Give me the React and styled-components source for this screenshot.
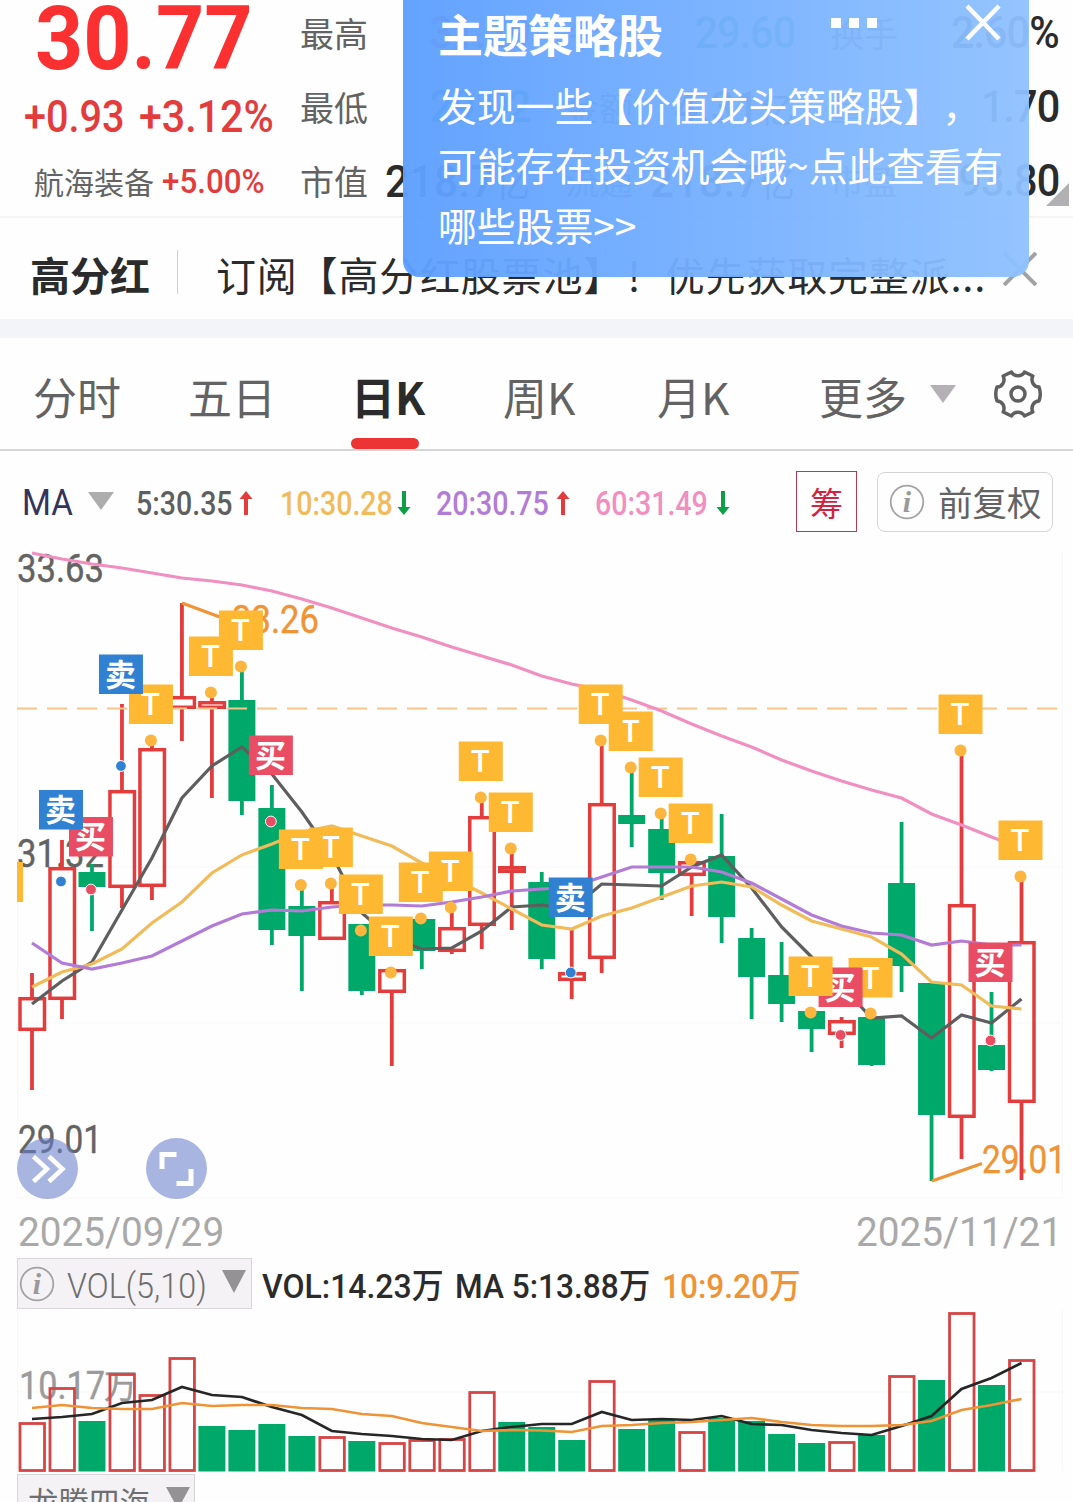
import React from 'react'
import styled, { createGlobalStyle } from 'styled-components'

const Color = {
    Red: '#e33c3c',
    Green: '#00a96a',
    Orange: '#ee9336',
    Tag: '#ffb832',
    Buy: '#e84d64',
    Sell: '#3181d2',
    Ma5: '#5e5e5e',
    Ma10: '#f0bb58',
    Ma20: '#b27cd6',
    Ma60: '#f08fc0',
    Text: '#2b2b2b',
    Gray: '#636363',
}

const CJK = '"Noto Sans CJK SC", "Noto Sans", sans-serif'
const NUM = 'Roboto, "Noto Sans CJK SC", sans-serif'

const GlobalStyle = createGlobalStyle`
  * { box-sizing: border-box; }
  body {
    margin: 0;
    background: #fefefe;
    font-family: ${CJK};
    color: ${Color.Text};
    text-spacing-trim: space-all;
  }
  svg { display: block; }
`

const Page = styled.div`
  position: relative;
  width: 1073px;
  height: 1502px;
  overflow: hidden;
`

// Roboto squeezed horizontally, the quote digits are narrower than the stock face
const NumeralBox = styled.span`
  display: inline-block;
  flex: none;
  width: ${(props) => props.$width}px;
  font-family: ${NUM};
  font-size: ${(props) => props.$size}px;
  font-weight: ${(props) => props.$weight || 400};
  line-height: 1;
  white-space: nowrap;
  color: ${(props) => props.$color || 'inherit'};
`
const NumeralText = styled.span`
  display: inline-block;
  transform-origin: left center;
  transform: scaleX(${(props) => props.$scale});
`

function Numeral({ width, size, weight, color, scale = 0.88, children }) {
    return (
        <NumeralBox $width={width} $size={size} $weight={weight} $color={color}>
            <NumeralText $scale={scale}>{children}</NumeralText>
        </NumeralBox>
    )
}

/* ---------- quote header ---------- */

const Header = styled.div`
  display: grid;
  grid-template-columns: 300px 759px;
  height: 218px;
  border-bottom: 2px solid #f7f2f4;
`
const PriceColumn = styled.div`
  display: flex;
  flex-direction: column;
`
const PriceRow = styled.div`
  display: flex;
  align-items: center;
  height: ${(props) => props.$height}px;
  padding-left: ${(props) => props.$left}px;
`
const SectorName = styled.span`
  width: 128px;
  font-size: 30px;
  line-height: 40px;
  margin-top: -2px;
  color: ${Color.Gray};
`
const QuoteGrid = styled.div`
  display: grid;
  grid-template-columns: 230px 230px 229px;
  grid-template-rows: 74px 74px 74px;
  column-gap: 35px;
  margin-top: -4px;
  height: 220px;
`
const QuoteCell = styled.div`
  display: flex;
  justify-content: space-between;
  align-items: center;
`
const QuoteLabel = styled.span`
  margin-top: -1px;
  font-size: 34px;
  line-height: 40px;
  color: ${Color.Gray};
`
const QuoteValue = styled.span`
  font-family: ${NUM};
  font-size: 44px;
  font-weight: 500;
  line-height: 44px;
  letter-spacing: ${(props) => props.$wide ? 0.5 : -1}px;
  color: ${(props) => props.$color || Color.Text};
  transform: scaleX(${(props) => props.$wide ? 0.96 : 0.94});
  transform-origin: right center;
`
const Unit = styled.span`
  font-family: ${CJK};
  font-size: 36px;
  font-weight: 400;
`
const CornerMark = styled.div`
  position: absolute;
  right: 4px;
  top: 183px;
  border-left: 23px solid transparent;
  border-bottom: 23px solid #b1b1b3;
`

const quotes = [
    ['最高', '31.29', '', Color.Red],
    ['今开', '29.60', '', Color.Green],
    ['换手', '2.60%', ''],
    ['最低', '29.02', '', Color.Green],
    ['金额', '4.31', '亿'],
    ['量比', '1.70', ''],
    ['市值', '218.7', '亿'],
    ['流通', '218.7', '亿'],
    ['市盈', '93.80', ''],
]

function QuoteHeader() {
    return (
        <Header>
            <PriceColumn>
                <PriceRow $height={76} $left={35}>
                    <Numeral width={220} size={89} weight={700} color="#fb3030" scale={0.945}>30.77</Numeral>
                </PriceRow>
                <PriceRow $height={81} $left={24}>
                    <Numeral width={115} size={45} weight={500} color={Color.Red} scale={0.88}>+0.93</Numeral>
                    <Numeral width={140} size={45} weight={500} color={Color.Red} scale={0.915}>+3.12%</Numeral>
                </PriceRow>
                <PriceRow $height={49} $left={34}>
                    <SectorName>航海装备</SectorName>
                    <Numeral width={110} size={33} weight={500} color={Color.Red} scale={0.95}>+5.00%</Numeral>
                </PriceRow>
            </PriceColumn>
            <QuoteGrid>
                {quotes.map(([label, value, unit, color]) => (
                    <QuoteCell key={label}>
                        <QuoteLabel>{label}</QuoteLabel>
                        <QuoteValue $color={color} $wide={Boolean(unit)}>{value}{unit && <Unit>{unit}</Unit>}</QuoteValue>
                    </QuoteCell>
                ))}
            </QuoteGrid>
        </Header>
    )
}

/* ---------- promo line ---------- */

const Promo = styled.div`
  display: flex;
  align-items: center;
  height: 101px;
  padding: 8px 36px 0 30px;
`
const PromoTitle = styled.div`
  width: 147px;
  padding-top: 2px;
  font-size: 40px;
  font-weight: 700;
  line-height: 50px;
`
const PromoRule = styled.div`
  width: 1px;
  height: 44px;
  margin-top: -2px;
  background: #cfcfcf;
`
const PromoText = styled.div`
  flex: 1;
  padding-top: 2px;
  padding-left: 38px;
  font-size: 40px;
  line-height: 50px;
  letter-spacing: 0.8px;
  white-space: nowrap;
`
const PromoClose = styled.svg`
  margin-top: -7px;
`
const Band = styled.div`
  height: 19px;
  background: #f3f4fa;
`

/* ---------- toast ---------- */

const Toast = styled.div`
  position: absolute;
  left: 403px;
  top: 0;
  width: 626px;
  height: 277px;
  padding: 4px 0 0 35px;
  border-radius: 0 0 16px 16px;
  color: #fff;
  background: linear-gradient(90deg, rgba(93, 159, 255, 0.96), rgba(143, 193, 255, 0.95));
`
const ToastHead = styled.div`
  display: flex;
  align-items: flex-start;
  height: 71px;
`
const ToastTitle = styled.div`
  width: 393px;
  font-size: 45px;
  font-weight: 700;
  line-height: 60px;
`
const ToastDots = styled.div`
  display: flex;
  gap: 8px;
  width: 134px;
  padding-top: 14px;
`
const ToastDot = styled.span`
  width: 10px;
  height: 10px;
  background: #fff;
`
const ToastBody = styled.div`
  margin-top: -1px;
  font-size: 38.8px;
  line-height: 60px;
  white-space: pre;
`

function ThemeToast() {
    return (
        <Toast>
            <ToastHead>
                <ToastTitle>主题策略股</ToastTitle>
                <ToastDots><ToastDot /><ToastDot /><ToastDot /></ToastDots>
                <svg width="36" height="38" viewBox="0 0 36 38" stroke="#fff" strokeWidth="4.5">
                    <path d="M2 2L34 35M34 2L2 35" />
                </svg>
            </ToastHead>
            <ToastBody>{'发现一些【价值龙头策略股】，\n可能存在投资机会哦~点此查看有\n哪些股票>>'}</ToastBody>
        </Toast>
    )
}

/* ---------- period tabs ---------- */

const Tabs = styled.div`
  display: grid;
  grid-template-columns: 155px 163px 152px 154px 162px 111px 64px 48px;
  height: 113px;
  padding-left: 33px;
  border-bottom: 2px solid #d6d6d6;
`
const Tab = styled.div`
  position: relative;
  padding-top: 26px;
  font-size: 44px;
  line-height: 64px;
  font-weight: ${(props) => props.$active ? 700 : 400};
  color: ${(props) => props.$active ? Color.Text : Color.Gray};

  &::after {
    content: '';
    display: ${(props) => props.$active ? 'block' : 'none'};
    position: absolute;
    left: 0;
    bottom: 0;
    width: 68px;
    height: 11px;
    border-radius: 6px;
    background: #ec3434;
  }
`
const TabIcon = styled.div`
  padding-top: ${(props) => props.$top}px;
`
const Triangle = styled.div`
  width: 0;
  border: ${(props) => props.$half}px solid transparent;
  border-top: ${(props) => props.$height}px solid ${(props) => props.$color || '#adadad'};
  border-bottom: 0;
`

function Gear() {
    return (
        <svg width="48" height="48" viewBox="-24 -24 48 48" fill="none" stroke="#5f5f5f" strokeWidth="3.5" strokeLinejoin="round">
            <path d="M-6.5 -22C-4 -17 4 -17 6.5 -22L14.8 -18C12.5 -13 15.5 -7 21 -7Q23.500 0 21 7C15.500 7 12.500 13 14.800 18L6.500 22C4 17 -4 17 -6.500 22L-14.800 18C-12.500 13 -15.500 7 -21 7Q-23.500 0 -21 -7C-15.500 -7 -12.500 -13 -14.800 -18Z" />
            <circle r="7" />
        </svg>
    )
}

/* ---------- moving average legend ---------- */

const Legend = styled.div`
  display: grid;
  grid-template-columns: 114px 144px 156px 159px 201px 81px 176px;
  align-items: center;
  height: 101px;
  padding-left: 22px;
`
const LegendItem = styled.div`
  display: flex;
  align-items: center;
  height: 60px;
  padding-top: 3px;
`
const LegendArrow = styled.div`
  margin-top: -5px;
`
const ChipButton = styled.div`
  width: 61px;
  height: 61px;
  border: 1.5px solid #b23a55;
  font-size: 33px;
  line-height: 61px;
  text-align: center;
  color: #cf2440;
`
const AdjustButton = styled.div`
  display: flex;
  align-items: center;
  gap: 13px;
  width: 176px;
  height: 60px;
  padding-left: 11px;
  border: 1.5px solid #d5d5d5;
  border-radius: 8px;
  font-size: 34.5px;
  line-height: 63px;
  white-space: nowrap;
  color: ${Color.Gray};
`

function InfoIcon() {
    return (
        <svg width="36" height="36" viewBox="0 0 36 36">
            <circle cx="18" cy="18" r="16.3" fill="none" stroke="#a3a3a3" strokeWidth="1.8" />
            <text x="18" y="28" textAnchor="middle" fontFamily="Liberation Serif, serif" fontStyle="italic" fontWeight="700" fontSize="30" fill="#999">i</text>
        </svg>
    )
}

function Trend({ up }) {
    return (
        <svg width="14" height="24" viewBox="0 0 14 24" fill={up ? Color.Red : '#0d9f46'}>
            <path d={up ? 'M7 0L13.5 8H9V24H5V8H.5Z' : 'M7 24L13.5 16H9V0H5V16H.5Z'} />
        </svg>
    )
}

const averages = [
    ['5:30.35', 103, Color.Ma5, true],
    ['10:30.28', 117, Color.Ma10, false],
    ['20:30.75', 120, Color.Ma20, true],
    ['60:31.49', 121, Color.Ma60, false],
]

/* ---------- candles ---------- */

const centerX = (i) => 32 + i * 29.985

// [rising, high, body top, body bottom, low]
const candles = [
    [1, 973, 997, 1031, 1090], [1, 840, 867, 1000, 1019], [0, 864, 872, 887, 931], [1, 704, 790, 888, 908],
    [1, 744, 748, 887, 900], [1, 603, 696, 709, 741], [1, 694, 701, 709, 798], [0, 668, 700, 801, 815],
    [0, 785, 808, 930, 945], [0, 887, 906, 936, 991], [1, 885, 901, 940, 940], [0, 924, 924, 991, 995],
    [1, 969, 969, 993, 1066], [0, 919, 919, 951, 969], [1, 909, 927, 952, 954], [1, 798, 816, 926, 949],
    [1, 850, 866, 873, 930], [0, 872, 882, 959, 969], [1, 930, 972, 981, 999], [1, 741, 803, 959, 973],
    [0, 768, 815, 824, 847], [0, 815, 829, 873, 900], [1, 860, 861, 876, 916], [0, 814, 856, 917, 943],
    [0, 928, 938, 977, 1019], [0, 942, 975, 1004, 1022], [0, 1011, 1011, 1029, 1052], [1, 1017, 1020, 1035, 1048],
    [0, 1012, 1017, 1065, 1066], [0, 822, 883, 966, 992], [0, 983, 983, 1115, 1181], [1, 750, 904, 1118, 1159],
    [0, 992, 1045, 1070, 1071], [1, 877, 941, 1103, 1180],
]

const ma5 = [1004, 981, 962, 910, 858, 798, 766, 747, 774, 812, 855, 913, 938, 949, 948, 931, 907, 905, 909, 884, 885, 886, 867, 855, 888, 927, 957, 986, 1018, 1016, 1038, 1015, 1023, 999]
const ma10 = [987, 972, 964, 949, 923, 902, 873, 855, 844, 832, 826, 836, 846, 863, 878, 893, 909, 925, 929, 916, 908, 897, 886, 882, 887, 905, 921, 929, 937, 954, 982, 985, 1006, 1009]
const ma20 = [943, 963, 969, 963, 956, 941, 926, 914, 910, 911, 907, 905, 905, 906, 902, 897, 891, 889, 887, 877, 867, 867, 867, 872, 883, 899, 915, 926, 933, 935, 945, 941, 945, 945]
const ma60 = [553, 559, 564, 568, 573, 578, 581, 585, 591, 599, 608, 618, 628, 637, 647, 656, 665, 676, 684, 690, 700, 711, 724, 736, 747, 760, 771, 781, 790, 798, 814, 825, 837, 848]

// [candle index, kind, tag top, dot y]
const tags = [
    [1, '卖', 790, 881.5], [2, '买', 817, 889.5], [3, '卖', 654.5, 766], [4, 'T', 684.5, 740.5],
    [6, 'T', 636.5, 692.5], [7, 'T', 610.5, 666.5], [8, '买', 735.5, 821.5], [9, 'T', 829.5, 885],
    [10, 'T', 827.5, 883.5], [11, 'T', 874.5, 930.5], [12, 'T', 916.5, 972.5], [13, 'T', 862.5, 918.5],
    [14, 'T', 851.5, 907.5], [15, 'T', 741.5, 797.5], [16, 'T', 792.5, 848.5], [18, '卖', 877.5, 972.5],
    [19, 'T', 684.5, 740.5], [20, 'T', 711.5, 767.5], [21, 'T', 757.5, 813.5], [22, 'T', 803.5, 859.5],
    [26, 'T', 956.5, 1012.5], [27, '买', 967.5, 1035], [28, 'T', 958, 1013.5], [31, 'T', 694.5, 750.5],
    [32, '买', 942.5, 1040.5], [33, 'T', 820.5, 876.5],
]
const tagColor = { T: Color.Tag, 买: Color.Buy, 卖: Color.Sell }

function Line({ values, color, width = 3.2 }) {
    return (
        <polyline
            points={values.map((y, i) => `${centerX(i)},${y}`).join(' ')}
            fill="none"
            stroke={color}
            strokeWidth={width}
        />
    )
}

function Candle({ index, data }) {
    const [rising, high, top, bottom, low] = data
    const x = centerX(index)
    const color = rising ? Color.Red : Color.Green
    return (
        <g stroke={color} fill={rising ? 'none' : color}>
            <path d={`M${x} ${high}V${top + 1}M${x} ${bottom - 1}V${low}`} strokeWidth="3.8" />
            {rising
                ? <rect x={x - 12} y={top + 1.7} width="24.5" height={bottom - top - 3.4} strokeWidth="3.5" />
                : <rect x={x - 13.5} y={top} width="27" height={bottom - top} stroke="none" />}
        </g>
    )
}

function Tag({ data }) {
    const [index, kind, top] = data
    const x = centerX(index) - 1
    const latin = kind === 'T'
    return (
        <g>
            <rect x={x - 22} y={top} width="44" height="39.5" fill={tagColor[kind]} />
            <text
                x={x - 0.5}
                y={top + (latin ? 30.5 : 31)}
                textAnchor="middle"
                fontFamily={latin ? 'Roboto, sans-serif' : CJK}
                fontWeight={latin ? 500 : 700}
                fontSize="31"
                fill="#fff"
            >
                {kind}
            </text>
        </g>
    )
}

const axisText = { fontFamily: NUM, fontSize: 38, lengthAdjust: 'spacingAndGlyphs' }

function CandleChart() {
    return (
        <svg width="1073" height="654" viewBox="0 552 1073 654" overflow="visible">
            <path d="M17.5 552V1198H1062.500V552M17 709H1062M17 867H1062M17 1023H1062" fill="none" stroke="#f8f8f9" />
            <g fill={Color.Gray} stroke={Color.Gray} strokeWidth="0.4">
                <text x="17" y="582" textLength="87" {...axisText}>33.63</text>
                <text x="17" y="867" textLength="87" {...axisText}>31.32</text>
                <text x="18" y="1153" textLength="84" {...axisText}>29.01</text>
            </g>
            <g fill={Color.Orange} stroke={Color.Orange} strokeWidth="0.4">
                <text x="232" y="633" textLength="87" {...axisText}>33.26</text>
                <text x="982" y="1173" textLength="84" {...axisText}>29.01</text>
            </g>
            {candles.map((data, i) => <Candle key={i} index={i} data={data} />)}
            <path d="M17 708.5H1060" stroke="#f6c58c" strokeWidth="1.8" strokeDasharray="20 10" />
            <path d="M182 603L232 621.5M932 1181L982 1163.5" stroke={Color.Orange} strokeWidth="3.2" />
            <Line values={ma5} color={Color.Ma5} />
            <Line values={ma10} color={Color.Ma10} />
            <Line values={ma20} color={Color.Ma20} />
            <Line values={ma60} color={Color.Ma60} />
            {tags.map(([i, kind, , y]) => (
                <circle
                    key={i}
                    cx={centerX(i) - 1}
                    cy={y}
                    r={kind === 'T' ? 6 : 5.4}
                    fill={kind === 'T' ? '#fcb53e' : tagColor[kind]}
                    stroke={kind === 'T' ? 'none' : '#fff'}
                />
            ))}
            <rect x="17" y="862" width="6" height="40" fill={Color.Tag} />
            {tags.slice().reverse().map((data) => <Tag key={data[0]} data={data} />)}
            <g fill="#6a80cb" fillOpacity="0.58">
                <circle cx="47.5" cy="1168.5" r="30.5" />
                <circle cx="176.5" cy="1168.5" r="30.5" />
            </g>
            <g fill="none" stroke="#fff">
                <path d="M33.5 1156.5L47 1169L33.5 1181.5M49 1156.5L62.5 1169L49 1181.5" strokeWidth="4.5" />
                <path d="M162 1169V1154.5H176.5M191 1169V1183.5H176.5" strokeWidth="5" />
            </g>
        </svg>
    )
}

/* ---------- volume ---------- */

const DateRow = styled.div`
  display: flex;
  justify-content: space-between;
  align-items: center;
  height: 52px;
  padding: 1px 11px 0 18px;
`
const VolumeRow = styled.div`
  display: flex;
  align-items: center;
  height: 51px;
  padding-left: 17px;
`
const IndicatorBox = styled.div`
  display: flex;
  align-items: center;
  gap: ${(props) => props.$gap}px;
  width: ${(props) => props.$width}px;
  height: 51px;
  padding-left: ${(props) => props.$left}px;
  border: 1.5px solid #d7d5d7;
  background: #f5f2f5;
  color: #6e6e6e;
`
const BoxLabel = styled.div`
  padding-top: 5px;
`
const BoxArrow = styled.div`
  margin-top: -4px;
`
const VolumeText = styled.div`
  display: flex;
  align-items: center;
  padding-top: 4px;
  padding-left: 10px;
`
const IndicatorName = styled.span`
  width: 124px;
  margin-top: 2px;
  font-size: 30.5px;
  line-height: 50px;
  white-space: nowrap;
`
const BottomRow = styled.div`
  padding-left: 17px;
`

const volumes = [1422, 1387, 1421, 1373, 1394, 1357, 1426, 1430, 1424, 1436, 1436, 1441, 1442, 1439, 1438, 1391, 1422, 1427, 1440, 1380, 1429, 1420, 1431, 1418, 1421, 1434, 1443, 1441, 1435, 1375, 1380, 1312, 1385, 1359]
const volMa5 = [1419, 1417, 1414, 1403, 1400, 1387, 1395, 1397, 1407, 1415, 1431, 1434, 1436, 1439, 1440, 1431, 1427, 1424, 1424, 1412, 1420, 1419, 1420, 1416, 1424, 1425, 1430, 1433, 1435, 1426, 1416, 1389, 1378, 1363]
const volMa10 = [1408, 1405, 1408, 1409, 1409, 1403, 1406, 1405, 1405, 1408, 1409, 1414, 1416, 1423, 1427, 1431, 1430, 1430.5, 1432, 1426, 1425, 1423, 1422, 1420, 1418, 1422, 1425, 1426, 1426, 1425, 1421, 1410, 1405, 1399]
// days whose volume bar is drawn hollow
const hollow = [0, 1, 3, 4, 5, 10, 12, 13, 14, 15, 19, 22, 27, 29, 31, 33]

function VolumeChart() {
    return (
        <svg width="1073" height="165" viewBox="0 1309 1073 165">
            <path d="M17.5 1309V1471M1062.5 1309V1471M17 1392H1062" fill="none" stroke="#f8f8f9" />
            <g fill="#9b9b9b" stroke="#9b9b9b" strokeWidth="0.4">
                <text x="19" y="1399" textLength="86" {...axisText}>10.17</text>
                <text x="104" y="1398" fontFamily={CJK} fontSize="33">万</text>
            </g>
            {volumes.map((top, i) => hollow.includes(i)
                ? <rect key={i} x={centerX(i) - 12} y={top + 1.5} width="24.5" height={1469 - top} fill="none" stroke="#d64545" strokeWidth="2.8" />
                : <rect key={i} x={centerX(i) - 13.5} y={top} width="27" height={1471.5 - top} fill={Color.Green} />
            )}
            <Line values={volMa5} color="#262626" width={2.7} />
            <Line values={volMa10} color={Color.Orange} width={2.7} />
        </svg>
    )
}

export default function App() {
    return (
        <Page>
            <GlobalStyle />
            <QuoteHeader />
            <CornerMark />
            <Promo>
                <PromoTitle>高分红</PromoTitle>
                <PromoRule />
                <PromoText>订阅【高分红股票池】！优先获取完整派...</PromoText>
                <PromoClose width="34" height="34" viewBox="0 0 34 34" stroke="#a2a2a2" strokeWidth="4">
                    <path d="M1 1L33 33M33 1L1 33" />
                </PromoClose>
            </Promo>
            <Band />
            <Tabs>
                <Tab>分时</Tab>
                <Tab>五日</Tab>
                <Tab $active>日K</Tab>
                <Tab>周K</Tab>
                <Tab>月K</Tab>
                <Tab>更多</Tab>
                <TabIcon $top={47}><Triangle $half={13} $height={18} $color="#b4b1b4" /></TabIcon>
                <TabIcon $top={32}><Gear /></TabIcon>
            </Tabs>
            <Legend>
                <LegendItem>
                    <Numeral width={66} size={36} color="#33335c" scale={0.92}>MA</Numeral>
                    <LegendArrow><Triangle $half={13} $height={18} /></LegendArrow>
                </LegendItem>
                {averages.map(([text, width, color, up]) => (
                    <LegendItem key={text}>
                        <Numeral width={width} size={33} color={color} weight={500} scale={0.865}>{text}</Numeral>
                        <Trend up={up} />
                    </LegendItem>
                ))}
                <ChipButton>筹</ChipButton>
                <AdjustButton><InfoIcon />前复权</AdjustButton>
            </Legend>
            <CandleChart />
            <DateRow>
                <Numeral width={208} size={41} color="#a9a9a9" scale={0.945}>2025/09/29</Numeral>
                <Numeral width={206} size={41} color="#a9a9a9" scale={0.945}>2025/11/21</Numeral>
            </DateRow>
            <VolumeRow>
                <IndicatorBox $width={235} $left={1} $gap={12}>
                    <InfoIcon />
                    <BoxLabel>
                        <Numeral width={143} size={35} weight={300} scale={0.925}>VOL(5,10)</Numeral>
                    </BoxLabel>
                    <BoxArrow><Triangle $half={12.5} $height={23} $color="#949294" /></BoxArrow>
                </IndicatorBox>
                <VolumeText>
                    <Numeral width={193} size={34} weight={500} scale={0.94}>VOL:14.23万</Numeral>
                    <Numeral width={207} size={34} weight={500} scale={0.93}>MA 5:13.88万</Numeral>
                    <Numeral width={140} size={34} weight={500} color={Color.Orange} scale={0.93}>10:9.20万</Numeral>
                </VolumeText>
            </VolumeRow>
            <VolumeChart />
            <BottomRow>
                <IndicatorBox $width={178} $left={10} $gap={14}>
                    <IndicatorName>龙腾四海</IndicatorName>
                    <BoxArrow><Triangle $half={12.5} $height={22} $color="#949294" /></BoxArrow>
                </IndicatorBox>
            </BottomRow>
            <ThemeToast />
        </Page>
    )
}
